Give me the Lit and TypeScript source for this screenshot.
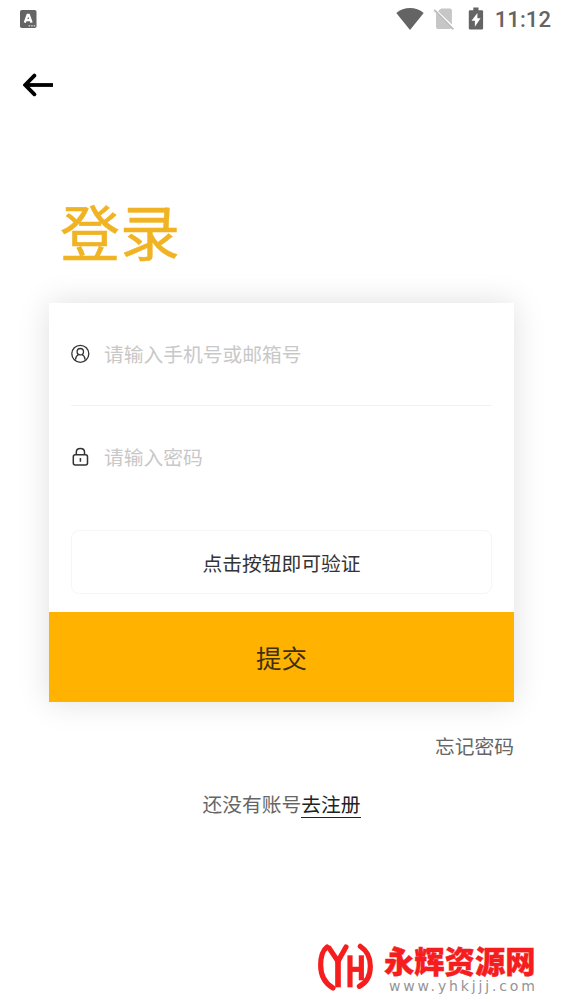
import { LitElement, html, css } from "lit";
import { customElement } from "lit/decorators.js";

@customElement("status-bar")
class StatusBar extends LitElement {
  static styles = css`
    :host { display: flex; height: 38px; align-items: center; padding: 0 12px 0 19px; justify-content: space-between; box-sizing: border-box; color: #646464; }
    svg { display: block; }
    .right { display: flex; align-items: center; }
    .wifi { margin-right: 9px; }
    .sim { margin-right: 14px; }
    .battery { margin-right: 11px; }
    .time { font: 500 22px/38px Roboto, sans-serif; letter-spacing: 0.1px; padding-top: 2px; }
  `;
  render() {
    return html`
      <svg width="18" height="20" viewBox="0 0 18 20">
        <rect x="1" y="1" width="16.5" height="18" rx="1.8" fill="#646464" />
        <path d="M5.8 13.6 8.6 6h1.2l2.8 7.6M7 11.2h4.4" fill="none" stroke="#fff" stroke-width="2.3" />
        <path d="M9.5 16.8h1.7M12.2 16.8h1.5M14.7 16.8h1.5" stroke="#ddd" stroke-width="1.3" />
      </svg>
      <div class="right">
        <svg class="wifi" width="28" height="24" viewBox="0 0 28 24">
          <path d="M0.3 6.1C4.1 2.7 9 1 14 1S23.9 2.7 27.7 6.1L14 23Z" fill="#646464" />
        </svg>
        <svg class="sim" width="21" height="24" viewBox="0 0 21 24">
          <path d="M8.2 1.6h8.7q2 0 2 2v14L5 4.2ZM3 5.8 18.4 21q-.6.9-1.6.9H5q-2 0-2-2Z" fill="#c6c6c6" />
          <path d="M1.2 2.8 20.4 22.3" stroke="#bbb" stroke-width="1.8" />
        </svg>
        <svg class="battery" width="16" height="24" viewBox="0 0 16 24">
          <path d="M5.3 .6h5.2v2.6H14q1.1 0 1.1 1.1v17q0 1.3-1.2 1.3H2q-1.2 0-1.2-1.3v-17q0-1.1 1.1-1.1h3.4Z" fill="#646464" />
          <path d="M9.4 5.9 3.5 13.8h3.4v6l5.7-8.5H9.4Z" fill="#fff" />
        </svg>
        <span class="time">11:12</span>
      </div>
    `;
  }
}

@customElement("login-card")
class LoginCard extends LitElement {
  static styles = css`
    :host { display: block; margin: 0 49px; background: #fff; box-shadow: 0 0 30px rgba(0, 0, 0, 0.13); height: 399px; }
    .fields { padding: 0 22px; height: 309px; box-sizing: border-box; }
    .field { display: flex; align-items: center; gap: 14px; height: 102px; color: #c8c8c8; }
    .field.first { border-bottom: 1px solid #f2f2f2; }
    .field svg { display: block; width: 19px; height: 20px; flex: none; }
    .verify { margin-top: 22px; height: 64px; box-sizing: border-box; border: 1px solid #f6f6f6; border-radius: 8px; display: flex; align-items: center; justify-content: center; color: #333; padding-top: 2px; }
    .submit { height: 90px; background: #ffb300; color: #3d3013; font-size: 25.5px; display: flex; align-items: center; justify-content: center; box-sizing: border-box; }
  `;
  render() {
    return html`
      <div class="fields">
        <div class="field first">
          <svg viewBox="0 0 19 20" fill="none" stroke="#333" stroke-width="1.3">
            <circle cx="9.3" cy="9.8" r="8.5" />
            <circle cx="9.3" cy="7.7" r="3.2" />
            <path d="M4.5 15.6C4.7 12.8 6 11.4 7.6 10.5M14.1 15.6C13.9 12.8 12.6 11.4 11 10.5" />
          </svg>
          <span>请输入手机号或邮箱号</span>
        </div>
        <div class="field">
          <svg viewBox="0 0 19 20" fill="none" stroke="#333" stroke-width="1.5">
            <rect x="2.3" y="7.8" width="14.2" height="10.2" rx="2" />
            <path d="M5.3 7.6V5.3Q5.3 1.6 9.4 1.6T13.5 5.3V7.6M9.4 11v3.7" />
          </svg>
          <span>请输入密码</span>
        </div>
        <div class="verify">点击按钮即可验证</div>
      </div>
      <div class="submit">提交</div>
    `;
  }
}

@customElement("site-mark")
class SiteMark extends LitElement {
  static styles = css`
    :host { display: flex; align-items: flex-start; }
    svg { display: block; width: 57px; height: 50px; flex: none; }
    .words { margin-left: 10px; white-space: nowrap; }
    .name { color: #f51d1d; font-weight: 900; font-size: 30.3px; line-height: 36px; height: 36px; -webkit-text-stroke: 0.4px #f51d1d; }
    .url { color: #949494; font: 14px/16px "DejaVu Sans", sans-serif; letter-spacing: 2.85px; margin: 0 0 0 5px; }
  `;
  render() {
    return html`
      <svg viewBox="50 35 171 150" fill="none" stroke="#f51d1d" stroke-width="15.5" stroke-linecap="round">
        <path d="M80 50C64 62 61 80 61 105C61 139 77 161 98 173" />
        <path d="M87 54 113 93 137 50" />
        <path d="M113 88V171" stroke-width="17" stroke-linecap="butt" />
        <path d="M149 75V171" stroke-linecap="butt" />
        <path d="M149 117H184" stroke-linecap="butt" />
        <path d="M183 75V150" stroke-linecap="butt" />
        <path d="M180 48C202 62 210 82 210 108C210 138 197 158 177 168" />
      </svg>
      <div class="words">
        <div class="name">永辉资源网</div>
        <div class="url">www.yhkjjj.com</div>
      </div>
    `;
  }
}

@customElement("app-root")
class AppRoot extends LitElement {
  static styles = css`
    :host { display: flex; flex-direction: column; height: 1002px; overflow: hidden; background: #fff; font-family: "Noto Sans CJK SC", sans-serif; font-size: 19.75px; line-height: 28px; }
    .back { height: 93px; padding: 0 23px; display: flex; align-items: center; }
    .back svg { display: block; width: 31px; height: 24px; }
    h1 { margin: 54px 0 28px 60px; font-weight: 400; font-size: 60px; line-height: 90px; color: #f0b323; -webkit-text-stroke: 0.5px #f0b323; }
    .forgot { margin: 30px 49px 0 0; text-align: right; color: #666; }
    .signup { display: flex; justify-content: center; margin-top: 30px; color: #666; }
    .link { color: #222; border-bottom: 1px solid #222; line-height: 28px; height: 27px; }
    site-mark { margin: auto 0 10px 317px; height: 50px; }
  `;
  render() {
    return html`
      <status-bar></status-bar>
      <div class="back">
        <svg viewBox="0 0 31 24" fill="none" stroke="#000" stroke-width="3.8">
          <path d="M2 12H30" />
          <path d="M11.4 2.6 2.2 12l9.2 9.3" stroke-linecap="round" />
        </svg>
      </div>
      <h1>登录</h1>
      <login-card></login-card>
      <div class="forgot">忘记密码</div>
      <div class="signup"><span>还没有账号</span><span class="link">去注册</span></div>
      <site-mark></site-mark>
    `;
  }
}
